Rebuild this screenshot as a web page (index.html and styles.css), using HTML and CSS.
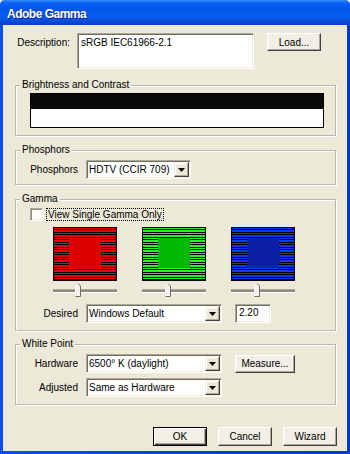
FILE: index.html
```html
<!DOCTYPE html>
<html lang="en">
<head>
<meta charset="UTF-8">
<title>Adobe Gamma</title>
<link rel="stylesheet" href="styles.css">
</head>
<body>
<div class="window">
    <div class="titlebar"><span class="title">Adobe Gamma</span></div>
    <div class="dialog">
        <div class="row desc-row">
            <span class="lbl lbl-desc">Description:</span>
            <div class="textbox">sRGB IEC61966-2.1</div>
            <div class="btn btn-load">Load...</div>
        </div>

        <div class="group group-bright">
            <span class="group-title">Brightness and Contrast</span>
            <div class="bc-bar">
                <div class="bc-black"></div>
                <div class="bc-white"></div>
            </div>
        </div>

        <div class="group group-phos">
            <span class="group-title">Phosphors</span>
            <div class="row">
                <span class="lbl">Phosphors</span>
                <div class="select sel-phos">
                    <span class="val">HDTV (CCIR 709)</span>
                    <span class="drop"><svg width="7" height="4" viewBox="0 0 7 4"><polygon points="0,0 7,0 3.5,4" fill="#000"/></svg></span>
                </div>
            </div>
        </div>

        <div class="group group-gamma">
            <span class="group-title">Gamma</span>
            <div class="check-row">
                <span class="checkbox"></span>
                <span class="check-label">View Single Gamma Only</span>
            </div>
            <div class="swatches">
                <div class="swatch sw-red"><div class="sw-center"></div></div>
                <div class="swatch sw-green"><div class="sw-center"></div></div>
                <div class="swatch sw-blue"><div class="sw-center"></div></div>
            </div>
            <div class="swatches sliders">
                <div class="slider">
                    <div class="track"></div>
                    <svg class="thumb" style="left:22px" width="6" height="14" viewBox="0 0 6 14"><path d="M0.5 13.5V3L3 0.5L5.5 3V13.5Z" fill="#F3F2EC"/><path d="M0.5 13V3L3 0.5" fill="none" stroke="#fff"/><path d="M3 0.5L5.5 3V13.5H0.5" fill="none" stroke="#716F64"/></svg>
                </div>
                <div class="slider">
                    <div class="track"></div>
                    <svg class="thumb" style="left:23px" width="6" height="14" viewBox="0 0 6 14"><path d="M0.5 13.5V3L3 0.5L5.5 3V13.5Z" fill="#F3F2EC"/><path d="M0.5 13V3L3 0.5" fill="none" stroke="#fff"/><path d="M3 0.5L5.5 3V13.5H0.5" fill="none" stroke="#716F64"/></svg>
                </div>
                <div class="slider">
                    <div class="track"></div>
                    <svg class="thumb" style="left:23px" width="6" height="14" viewBox="0 0 6 14"><path d="M0.5 13.5V3L3 0.5L5.5 3V13.5Z" fill="#F3F2EC"/><path d="M0.5 13V3L3 0.5" fill="none" stroke="#fff"/><path d="M3 0.5L5.5 3V13.5H0.5" fill="none" stroke="#716F64"/></svg>
                </div>
            </div>
            <div class="row desired-row">
                <span class="lbl">Desired</span>
                <div class="select sel-wide">
                    <span class="val">Windows Default</span>
                    <span class="drop"><svg width="7" height="4" viewBox="0 0 7 4"><polygon points="0,0 7,0 3.5,4" fill="#000"/></svg></span>
                </div>
                <div class="input-small">2.20</div>
            </div>
        </div>

        <div class="group group-white">
            <span class="group-title">White Point</span>
            <div class="row">
                <span class="lbl">Hardware</span>
                <div class="select sel-wide">
                    <span class="val">6500° K (daylight)</span>
                    <span class="drop"><svg width="7" height="4" viewBox="0 0 7 4"><polygon points="0,0 7,0 3.5,4" fill="#000"/></svg></span>
                </div>
                <div class="btn btn-measure">Measure...</div>
            </div>
            <div class="row adjusted-row">
                <span class="lbl">Adjusted</span>
                <div class="select sel-wide">
                    <span class="val">Same as Hardware</span>
                    <span class="drop"><svg width="7" height="4" viewBox="0 0 7 4"><polygon points="0,0 7,0 3.5,4" fill="#000"/></svg></span>
                </div>
            </div>
        </div>

        <div class="buttons">
            <div class="btn btn-default">OK</div>
            <div class="btn">Cancel</div>
            <div class="btn">Wizard</div>
        </div>
    </div>
</div>
</body>
</html>
```

FILE: styles.css
```css
html, body {
    margin: 0;
    padding: 0;
    background: #ffffff;
}

.window {
    width: 350px;
    height: 454px;
    display: flex;
    flex-direction: column;
    background: linear-gradient(to right, #0A4FEF, #0842D8 50%, #0638C8);
    border-radius: 5px 5px 0 0;
    overflow: hidden;
}

.titlebar {
    height: 25px;
    flex: none;
    display: flex;
    align-items: center;
    padding-left: 7px;
    background: linear-gradient(to bottom, #3A8DFF 0, #0C62F0 3px, #0057EC 9px, #0A5AEA 18px, #0849D6 22px, #0A3EC0 25px);
}

.title {
    padding-top: 2px;
    color: #ffffff;
    font: bold 12px "Liberation Sans", Arial, sans-serif;
    letter-spacing: -0.5px;
    text-shadow: 1px 1px 0 #0C238F;
}

.dialog {
    flex: 1;
    margin: 0 3px 3px;
    padding: 8px 11px 0 12px;
    background: #ECE9D8;
    font: 10px "Liberation Sans", Arial, sans-serif;
    color: #000000;
}

.row {
    display: flex;
    align-items: center;
}

.lbl {
    width: 62px;
    margin-right: 8px;
    text-align: right;
    white-space: nowrap;
}

/* description */
.desc-row {
    align-items: flex-start;
}

.lbl-desc {
    width: 55px;
    margin-right: 7px;
    padding-top: 4px;
}

.textbox {
    width: 177px;
    height: 36px;
    box-sizing: border-box;
    padding: 3px 3px;
    background: #ffffff;
    border: 1px solid;
    border-color: #ACA899 #ffffff #ffffff #ACA899;
    box-shadow: inset 1px 1px 0 #716F64, inset -1px -1px 0 #F1EFE2;
    line-height: 12px;
}

.btn {
    height: 19px;
    width: 54px;
    box-sizing: border-box;
    display: flex;
    align-items: center;
    justify-content: center;
    background: #F1EFE6;
    border: 1px solid;
    border-color: #ffffff #404040 #404040 #ffffff;
    box-shadow: inset -1px -1px 0 #ACA899;
}

.btn-load {
    width: 54px;
    height: 18px;
    margin-left: 13px;
}

.btn-measure {
    width: 60px;
    height: 18px;
    margin-left: 13px;
}

.btn-default {
    border-color: #000000;
    box-shadow: inset 1px 1px 0 #ffffff, inset -1px -1px 0 #404040, inset -2px -2px 0 #ACA899;
}

/* group boxes */
.group {
    position: relative;
    border: 1px solid #BAB8AA;
    box-shadow: 1px 1px 0 #ffffff, inset 1px 1px 0 #ffffff;
}

.group-title {
    position: absolute;
    top: -7px;
    left: 4px;
    padding: 0 2px;
    line-height: 12px;
    background: #ECE9D8;
    white-space: nowrap;
}

.group-bright {
    margin-top: 16px;
    padding: 7px 0 7px 14px;
}

.bc-bar {
    width: 292px;
    border: 1px solid #000000;
}

.bc-black {
    height: 15px;
    background: #0A0A0A;
}

.bc-white {
    height: 18px;
    background: #ffffff;
}

.group-phos {
    margin-top: 14px;
    padding: 9px 0 5px;
}

.select {
    height: 19px;
    box-sizing: border-box;
    display: flex;
    align-items: stretch;
    padding: 1px;
    background: #ffffff;
    border: 1px solid;
    border-color: #ACA899 #ffffff #ffffff #ACA899;
    box-shadow: inset 1px 1px 0 #716F64, inset -1px -1px 0 #F1EFE2;
}

.select .val {
    flex: 1;
    padding-left: 1px;
    line-height: 15px;
    white-space: nowrap;
    overflow: hidden;
}

.drop {
    width: 15px;
    box-sizing: border-box;
    display: flex;
    align-items: center;
    justify-content: center;
    background: #ECE9D8;
    border: 1px solid;
    border-color: #F1EFE2 #404040 #404040 #F1EFE2;
    box-shadow: inset -1px -1px 0 #ACA899, inset 1px 1px 0 #ffffff;
}

.sel-phos {
    width: 105px;
}

.sel-wide {
    width: 136px;
}

/* gamma */
.group-gamma {
    margin-top: 14px;
    padding: 8px 0 7px;
}

.check-row {
    display: flex;
    align-items: center;
    height: 13px;
    padding-left: 14px;
}

.checkbox {
    width: 13px;
    height: 13px;
    box-sizing: border-box;
    background: #ffffff;
    border: 1px solid;
    border-color: #ACA899 #ffffff #ffffff #ACA899;
    box-shadow: inset 1px 1px 0 #8E8C80, inset -1px -1px 0 #F1EFE2;
}

.check-label {
    margin-left: 3px;
    padding: 0 1px;
    line-height: 11px;
    border: 1px dotted #000000;
    white-space: nowrap;
}

.swatches {
    display: flex;
    gap: 25px;
    padding-left: 37px;
    margin-top: 6px;
}

.swatch {
    width: 64px;
    height: 54px;
    box-sizing: border-box;
    border: 1px solid #000000;
    display: flex;
    justify-content: center;
    align-items: flex-start;
}

.sw-center {
    width: 32px;
    height: 30px;
    margin-top: 10px;
}

/* scan lines: thin and thick colour bands between 1px black lines */
.sw-red {
    background: repeating-linear-gradient(to bottom, #F00000 0 1px, #000000 1px 2px, #F00000 2px 4px, #000000 4px 5px);
}

.sw-red .sw-center {
    background: #DE0000;
}

.sw-green {
    background: repeating-linear-gradient(to bottom, #2AF02A 0 1px, #000000 1px 2px, #2AF02A 2px 4px, #000000 4px 5px);
}

.sw-green .sw-center {
    background: #00B800;
}

.sw-blue {
    background: repeating-linear-gradient(to bottom, #0A3CF8 0 1px, #000000 1px 2px, #0A3CF8 2px 4px, #000000 4px 5px);
}

.sw-blue .sw-center {
    background: #0A1FA4;
}

.sliders {
    margin-top: 2px;
}

.slider {
    position: relative;
    width: 64px;
    height: 14px;
    padding-top: 6px;
    box-sizing: border-box;
}

.track {
    height: 2px;
    border-top: 1px solid #ACA899;
    border-bottom: 1px solid #ffffff;
    background: #8D8B7F;
}

.thumb {
    position: absolute;
    top: 0;
}

.desired-row {
    margin-top: 7px;
}

.input-small {
    width: 36px;
    height: 19px;
    box-sizing: border-box;
    margin-left: 13px;
    padding: 0 3px;
    line-height: 15px;
    background: #ffffff;
    border: 1px solid;
    border-color: #ACA899 #ffffff #ffffff #ACA899;
    box-shadow: inset 1px 1px 0 #716F64, inset -1px -1px 0 #F1EFE2;
}

/* white point */
.group-white {
    margin-top: 13px;
    padding: 9px 0 7px;
}

.adjusted-row {
    margin-top: 5px;
}

.buttons {
    display: flex;
    justify-content: flex-end;
    gap: 11px;
    margin-top: 22px;
    margin-right: -1px;
}
```
